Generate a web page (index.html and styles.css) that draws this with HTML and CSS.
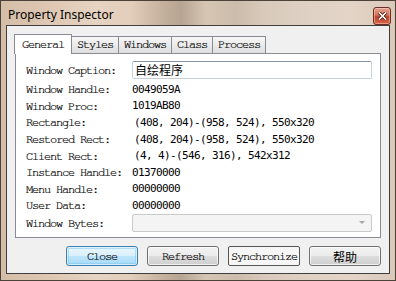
FILE: index.html
```html
<!DOCTYPE html>
<html lang="en">
<head>
    <meta charset="UTF-8">
    <meta name="viewport" content="width=device-width, initial-scale=1.0">
    <title>Property Inspector</title>
    <link rel="stylesheet" href="styles.css">
</head>
<body>
    <div class="window">
        <!-- titel balk -->
        <div class="titlebar">
            <span class="title">Property Inspector</span>
            <button class="close-x" aria-label="Close">
                <svg width="9" height="8" viewBox="0 0 9 8">
                    <path d="M1 0.5 L8 7.5 M8 0.5 L1 7.5" stroke="#4a1b12" stroke-width="3.2"/>
                    <path d="M1 0.5 L8 7.5 M8 0.5 L1 7.5" stroke="#ffffff" stroke-width="1.6"/>
                </svg>
            </button>
        </div>

        <div class="client">
            <div class="tabs">
                <div class="tab active">General</div>
                <div class="tab">Styles</div>
                <div class="tab">Windows</div>
                <div class="tab">Class</div>
                <div class="tab">Process</div>
            </div>

            <div class="panel">
                <div class="row caption-row">
                    <span class="label">Window Caption:</span>
                    <div class="textbox">自绘程序</div>
                </div>
                <div class="row">
                    <span class="label">Window Handle:</span>
                    <span class="value">0049059A</span>
                </div>
                <div class="row">
                    <span class="label">Window Proc:</span>
                    <span class="value">1019AB80</span>
                </div>
                <div class="row">
                    <span class="label">Rectangle:</span>
                    <span class="value shift">(408, 204)-(958, 524), 550x320</span>
                </div>
                <div class="row">
                    <span class="label">Restored Rect:</span>
                    <span class="value shift">(408, 204)-(958, 524), 550x320</span>
                </div>
                <div class="row">
                    <span class="label">Client Rect:</span>
                    <span class="value shift">(4, 4)-(546, 316), 542x312</span>
                </div>
                <div class="row">
                    <span class="label">Instance Handle:</span>
                    <span class="value">01370000</span>
                </div>
                <div class="row">
                    <span class="label">Menu Handle:</span>
                    <span class="value">00000000</span>
                </div>
                <div class="row">
                    <span class="label">User Data:</span>
                    <span class="value">00000000</span>
                </div>
                <div class="row bytes-row">
                    <span class="label">Window Bytes:</span>
                    <div class="combo">
                        <span class="arrow"></span>
                    </div>
                </div>
            </div>

            <div class="buttons">
                <button class="btn default">Close</button>
                <button class="btn">Refresh</button>
                <button class="btn flat">Synchronize</button>
                <button class="btn cjk">帮助</button>
            </div>
        </div>
    </div>
</body>
</html>
```

FILE: styles.css
```css
* {
    box-sizing: border-box;
}

body {
    margin: 0;
    background: #ffffff;
}

.window {
    width: 396px;
    height: 281px;
    border: 1px solid #4d4237;
    padding: 0 5px 6px 5px;
    background:
        linear-gradient(90deg,
            #d5bea8 0px, #dcc6b1 40px, #e7d3c2 95px, #e3cdbb 130px,
            #c2ae9b 165px, #b6a592 180px, #d6c5b3 205px, #cbbcab 235px,
            #d9cabb 265px, #dfd1c4 310px, #e3d4c7 350px, #dac8b8 396px);
    display: flex;
    flex-direction: column;
}

.titlebar {
    height: 24px;
    display: flex;
    align-items: center;
    justify-content: space-between;
    padding: 0 0 0 2px;
}

.title {
    font-family: "Noto Sans", "Open Sans", sans-serif;
    font-size: 12px;
    color: #000000;
    margin-top: 2px;
}

.close-x {
    width: 18px;
    height: 18px;
    margin-right: -1px;
    margin-top: 5px;
    padding: 0;
    border: 1px solid #6a2f22;
    border-radius: 3px;
    background: linear-gradient(180deg, #e4a592 0%, #d46e56 45%, #c0432b 55%, #d8664c 100%);
    box-shadow: inset 0 0 0 1px rgba(255, 220, 200, 0.45);
    display: flex;
    align-items: center;
    justify-content: center;
}

.client {
    flex: 1;
    border: 1px solid #3f3f3f;
    background: #f0f0f0;
    padding: 8px 8px 0 8px;
}

.tabs {
    display: flex;
    align-items: flex-end;
    height: 19px;
    padding-left: 1px;
    position: relative;
    z-index: 1;
}

/* serif mono zoals de systeemfont; valt terug op Liberation Mono */
.tab,
.label,
.btn {
    font-family: "Nimbus Mono PS", "Nimbus Mono L", "FreeMono", "Courier 10 Pitch", "Liberation Mono", monospace;
    font-size: 12px;
    letter-spacing: -1.2px;
    color: #000000;
    -webkit-text-stroke: 0.2px #000000;
}

.tab {
    height: 17px;
    line-height: 15px;
    padding: 0 5px;
    border: 1px solid #898c95;
    border-bottom: none;
    margin-right: -1px;
    background: linear-gradient(180deg, #f6f6f6 0%, #ebebeb 50%, #dddddd 100%);
}

.tab.active {
    height: 20px;
    line-height: 18px;
    margin: 0 -1px 0 -2px;
    padding: 0 7px;
    background: #ffffff;
    position: relative;
    top: 1px;
    z-index: 2;
}

.panel {
    height: 185px;
    border: 1px solid #898c95;
    background: #ffffff;
    padding: 7px 0 0 10px;
}

.row {
    display: flex;
    align-items: center;
    height: 16.6px;
}

.caption-row {
    height: 18px;
    margin-bottom: 2px;
}

.bytes-row {
    height: 18px;
}

.label {
    width: 106px;
    flex: none;
    white-space: pre;
}

.value {
    font-family: "DejaVu Sans Mono", monospace;
    font-size: 11px;
    letter-spacing: -0.62px;
    color: #000000;
    white-space: pre;
}

.value.shift {
    margin-left: 2px;
}

.textbox {
    width: 240px;
    height: 18px;
    border: 1px solid #c5d0db;
    border-top-color: #8895a3;
    border-radius: 2px;
    background: #ffffff;
    padding-left: 2px;
    font-family: "Noto Sans CJK SC", sans-serif;
    font-size: 12px;
    line-height: 16px;
    color: #000000;
}

.combo {
    width: 240px;
    height: 18px;
    border: 1px solid #c9c9c9;
    border-radius: 2px;
    background: #f4f4f4;
    display: flex;
    align-items: center;
    justify-content: flex-end;
    padding-right: 6px;
}

.arrow {
    width: 0;
    height: 0;
    border-left: 3px solid transparent;
    border-right: 3px solid transparent;
    border-top: 3px solid #a6a6a6;
}

.buttons {
    display: flex;
    justify-content: flex-end;
    gap: 9px;
    margin-top: 8px;
}

.btn {
    width: 72px;
    height: 20px;
    padding: 0;
    border: 1px solid #707070;
    border-radius: 3px;
    background: linear-gradient(180deg, #f2f2f2 0%, #ebebeb 48%, #dddddd 52%, #cfcfcf 100%);
    box-shadow: inset 0 0 0 1px rgba(255, 255, 255, 0.7);
}

.btn.default {
    border-color: #3c7fb1;
    background: linear-gradient(180deg, #eaf6fd 0%, #d9f0fc 48%, #bee6fd 52%, #a7d9f5 100%);
    box-shadow: inset 0 0 0 1px rgba(255, 255, 255, 0.6), inset 0 0 0 2px rgba(120, 200, 240, 0.5);
}

.btn.flat {
    border-color: #555555;
    border-radius: 2px;
    background: #f6f6f6;
    box-shadow: none;
}

.btn.cjk {
    font-family: "Noto Sans CJK SC", sans-serif;
    font-size: 12px;
    letter-spacing: 0;
    -webkit-text-stroke: 0;
}
```
